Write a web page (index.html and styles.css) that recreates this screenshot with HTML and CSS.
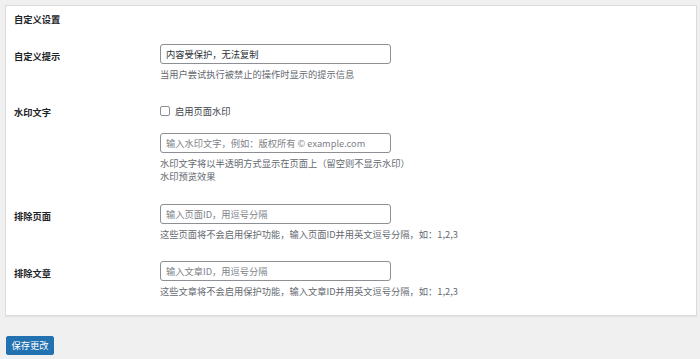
FILE: index.html
```html
<!DOCTYPE html>
<html lang="zh-CN">
<head>
<meta charset="utf-8">
<title>自定义设置</title>
<link rel="stylesheet" href="styles.css">
</head>
<body>
<form class="page">
  <section class="panel">
    <h2 class="panel-title">自定义设置</h2>

    <div class="row row-first">
      <div class="label label-input">自定义提示</div>
      <div class="field">
        <input class="text-input" type="text" value="内容受保护，无法复制">
        <p class="desc">当用户尝试执行被禁止的操作时显示的提示信息</p>
      </div>
    </div>

    <div class="row row-watermark">
      <div class="label label-check">水印文字</div>
      <div class="field">
        <label class="check-line"><span class="checkbox"></span><span>启用页面水印</span></label>
        <input class="text-input input-after-check" type="text" placeholder="输入水印文字，例如：版权所有 © example.com">
        <p class="desc">水印文字将以半透明方式显示在页面上（留空则不显示水印）</p>
        <p class="desc">水印预览效果</p>
      </div>
    </div>

    <div class="row row-pages">
      <div class="label label-input">排除页面</div>
      <div class="field">
        <input class="text-input" type="text" placeholder="输入页面ID，用逗号分隔">
        <p class="desc">这些页面将不会启用保护功能，输入页面ID并用英文逗号分隔，如：1,2,3</p>
      </div>
    </div>

    <div class="row row-posts">
      <div class="label label-input">排除文章</div>
      <div class="field">
        <input class="text-input" type="text" placeholder="输入文章ID，用逗号分隔">
        <p class="desc">这些文章将不会启用保护功能，输入文章ID并用英文逗号分隔，如：1,2,3</p>
      </div>
    </div>
  </section>

  <div class="actions">
    <button class="button-primary" type="button">保存更改</button>
  </div>
</form>
</body>
</html>
```

FILE: styles.css
```css
* {
  box-sizing: border-box;
}

html, body {
  margin: 0;
  padding: 0;
  background: #f0f0f1;
}

body {
  font-family: "Noto Sans CJK SC", "Noto Sans", "Liberation Sans", sans-serif;
  font-size: 9.25px;
  color: #1d2327;
}

.page {
  padding: 5px 3px 0 5px;
}

.panel {
  background: #ffffff;
  border: 1px solid #dcdcde;
  box-shadow: 0 1px 1px rgba(0, 0, 0, 0.05);
  padding: 0 8px 17px 8px;
}

.panel-title {
  margin: 0;
  padding-top: 6px;
  font-size: 9.25px;
  line-height: 14px;
  font-weight: 700;
  color: #1d2327;
}

.row {
  display: grid;
  grid-template-columns: 146px 1fr;
}

.row-first { margin-top: 18px; }
.row-watermark { margin-top: 23px; }
.row-pages { margin-top: 21px; }
.row-posts { margin-top: 20px; }

.label {
  font-weight: 700;
  line-height: 14px;
  color: #1d2327;
}

.label-input {
  padding-top: 5px;
}

.label-check {
  padding-top: 1px;
}

.field {
  display: flex;
  flex-direction: column;
  align-items: flex-start;
}

.text-input {
  display: block;
  width: 231px;
  height: 20px;
  margin: 0;
  padding: 0 5px;
  border: 1px solid #8c8f94;
  border-radius: 3px;
  background: #ffffff;
  font-family: inherit;
  font-size: 9.25px;
  line-height: 18px;
  color: #2c3338;
  outline: none;
}

.text-input::placeholder {
  color: #7e8288;
  opacity: 1;
}

.input-after-check {
  margin-top: 15px;
}

.check-line {
  display: flex;
  align-items: center;
  gap: 5px;
  height: 14px;
  line-height: 14px;
  color: #3c434a;
}

.checkbox {
  display: block;
  width: 10px;
  height: 10px;
  border: 1px solid #8c8f94;
  border-radius: 2px;
  background: #ffffff;
}

.desc {
  margin: 0;
  line-height: 13px;
  color: #646970;
}

.input-after-check + .desc,
.text-input + .desc {
  margin-top: 4px;
}

.actions {
  margin-top: 20px;
  padding-left: 1px;
}

.button-primary {
  display: block;
  width: 48px;
  height: 19px;
  margin: 0;
  padding: 0;
  border: 1px solid #2271b1;
  border-radius: 2px;
  background: #2271b1;
  color: #ffffff;
  font-family: inherit;
  font-size: 9.25px;
  line-height: 17px;
  text-align: center;
  cursor: pointer;
}
```
